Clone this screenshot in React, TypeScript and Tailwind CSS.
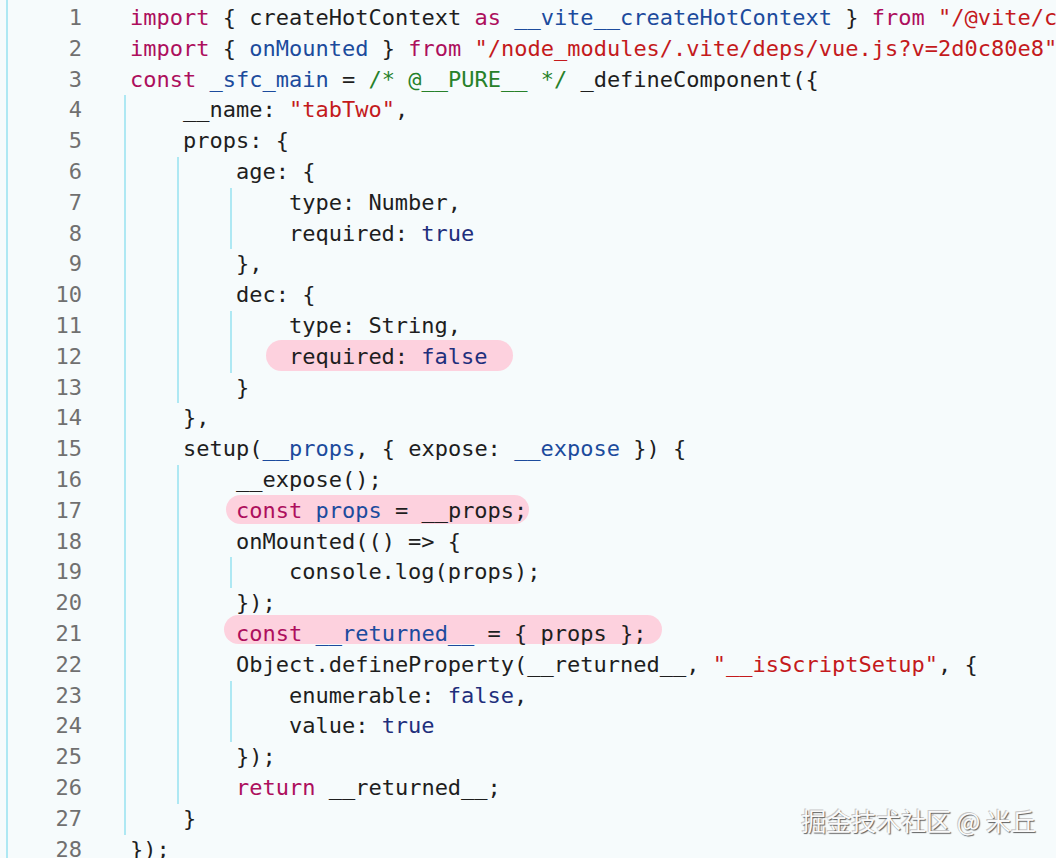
type Tok = [string, string?];

/* token colours */
const tone: Record<string, string> = {
  k: 'text-[#ad0f5d]',
  b: 'text-[#1c4b9d]',
  s: 'text-[#c41a1c]',
  c: 'text-[#27812a]',
  v: 'text-[#1f2f7c]',
};

type Line = {
  depth: number;
  toks: Tok[];
  mark?: { left: number; width: number; top: number; height: number };
};

const lines: Line[] = [
  { depth: 0, toks: [['import', 'k'], [' { createHotContext '], ['as', 'k'], [' '], ['__vite__createHotContext', 'b'], [' } '], ['from', 'k'], [' '], ['"/@vite/client"', 's'], [';']] },
  { depth: 0, toks: [['import', 'k'], [' { '], ['onMounted', 'b'], [' } '], ['from', 'k'], [' '], ['"/node_modules/.vite/deps/vue.js?v=2d0c80e8"', 's'], [';']] },
  { depth: 0, toks: [['const', 'k'], [' '], ['_sfc_main', 'b'], [' = '], ['/* @__PURE__ */', 'c'], [' _defineComponent({']] },
  { depth: 1, toks: [['__name: '], ['"tabTwo"', 's'], [',']] },
  { depth: 1, toks: [['props: {']] },
  { depth: 2, toks: [['age: {']] },
  { depth: 3, toks: [['type: Number,']] },
  { depth: 3, toks: [['required: '], ['true', 'v']] },
  { depth: 2, toks: [['},']] },
  { depth: 2, toks: [['dec: {']] },
  { depth: 3, toks: [['type: String,']] },
  { depth: 3, toks: [['required: '], ['false', 'v']], mark: { left: -23, width: 247, top: 4, height: 31 } },
  { depth: 2, toks: [['}']] },
  { depth: 1, toks: [['},']] },
  { depth: 1, toks: [['setup('], ['__props', 'b'], [', { expose: '], ['__expose', 'b'], [' }) {']] },
  { depth: 2, toks: [['__expose();']] },
  { depth: 2, toks: [['const', 'k'], [' '], ['props', 'b'], [' = __props;']], mark: { left: -10, width: 303, top: 5, height: 29 } },
  { depth: 2, toks: [['onMounted(() => {']] },
  { depth: 3, toks: [['console.log(props);']] },
  { depth: 2, toks: [['});']] },
  { depth: 2, toks: [['const', 'k'], [' '], ['__returned__', 'b'], [' = { props };']], mark: { left: -12, width: 438, top: 2, height: 29 } },
  { depth: 2, toks: [['Object.defineProperty(__returned__, '], ['"__isScriptSetup"', 's'], [', {']] },
  { depth: 3, toks: [['enumerable: '], ['false', 'v'], [',']] },
  { depth: 3, toks: [['value: '], ['true', 'v']] },
  { depth: 2, toks: [['});']] },
  { depth: 2, toks: [['return', 'k'], [' __returned__;']] },
  { depth: 1, toks: [['}']] },
  { depth: 0, toks: [['});']] },
];

function CodeLine({ line }: { line: Line }) {
  return (
    <div className="flex h-[30.8px] items-center whitespace-pre">
      {/* indent columns, each with its guide */}
      {Array.from({ length: line.depth }).map((_, i) => (
        <span key={i} className="relative inline-block h-full w-[4ch] shrink-0">
          <span className="absolute inset-y-0 left-[-6px] w-[2px] bg-[#aee8f3]" />
        </span>
      ))}
      <span className="relative">
        {line.mark && (
          <span
            className="absolute rounded-full bg-[#fdd1de]"
            style={{ left: line.mark.left, width: line.mark.width, top: line.mark.top - 6, height: line.mark.height }}
          />
        )}
        <span className="relative">
          {line.toks.map(([text, kind], i) => (
            <span key={i} className={kind ? tone[kind] : 'text-[#1e1e1e]'}>
              {text}
            </span>
          ))}
        </span>
      </span>
    </div>
  );
}

export default function App() {
  return (
    <div className="relative h-[858px] w-full overflow-hidden bg-[#f6fbfc] font-['DejaVu_Sans_Mono',monospace] text-[22px] leading-[30.8px]">
      <div className="ml-[6px] flex h-full border-l-2 border-[#aee8f3] pt-[3px]">
        {/* gutter */}
        <div className="w-[74px] shrink-0 text-right text-[#707070]">
          {lines.map((_, i) => (
            <div key={i} className="h-[30.8px]">
              {i + 1}
            </div>
          ))}
        </div>
        {/* code */}
        <div className="min-w-0 flex-1 overflow-hidden pl-[48px]">
          {lines.map((line, i) => (
            <CodeLine key={i} line={line} />
          ))}
        </div>
      </div>

      {/* watermark */}
      <div className="absolute right-[20px] top-[804px] font-['Noto_Sans_CJK_SC',sans-serif] text-[25px] leading-[32px] text-[#fafafa] [text-shadow:1px_1px_1px_#5f5f5f,-1px_-1px_0_#c8c8c8]">
        掘金技术社区 @ 米丘
      </div>
    </div>
  );
}
